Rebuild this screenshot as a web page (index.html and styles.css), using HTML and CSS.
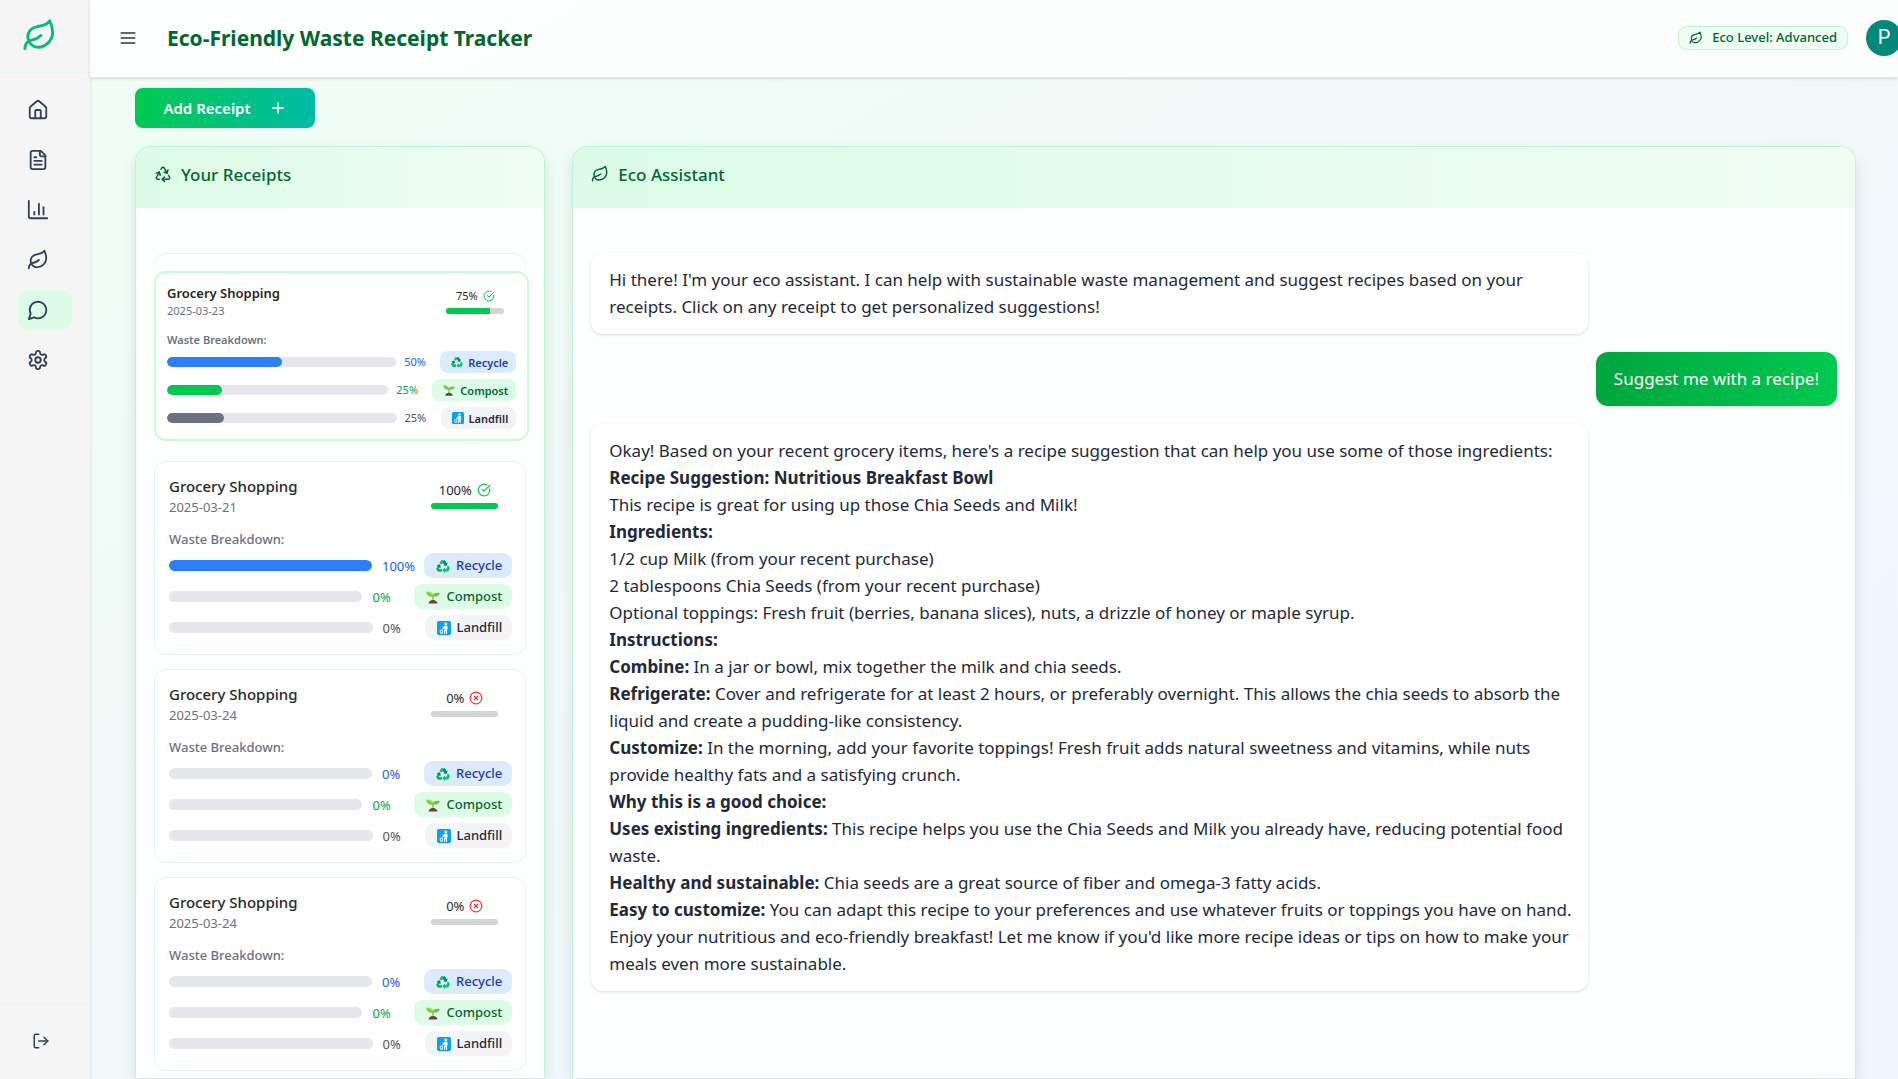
FILE: index.html
```html
<!DOCTYPE html>
<html lang="en">
<head>
<meta charset="utf-8">
<meta name="viewport" content="width=device-width, initial-scale=1">
<title>Eco-Friendly Waste Receipt Tracker</title>
<link rel="stylesheet" href="styles.css">
</head>
<body>
<svg class="sprite" aria-hidden="true">
  <symbol id="leaf" viewBox="0 0 24 24"><path d="M11 20A7 7 0 0 1 9.8 6.1C15.5 5 17 4.48 19 2c1 2 2 4.18 2 8 0 5.5-4.78 10-10 10Z"/><path d="M2 21c0-3 1.85-5.36 5.08-6C9.5 14.52 12 13 13 12"/></symbol>
  <symbol id="home" viewBox="0 0 24 24"><path d="M15 21v-8a1 1 0 0 0-1-1h-4a1 1 0 0 0-1 1v8"/><path d="M3 10a2 2 0 0 1 .709-1.528l7-5.999a2 2 0 0 1 2.582 0l7 5.999A2 2 0 0 1 21 10v9a2 2 0 0 1-2 2H5a2 2 0 0 1-2-2z"/></symbol>
  <symbol id="file" viewBox="0 0 24 24"><path d="M15 2H6a2 2 0 0 0-2 2v16a2 2 0 0 0 2 2h12a2 2 0 0 0 2-2V7Z"/><path d="M14 2v4a2 2 0 0 0 2 2h4"/><path d="M10 9H8"/><path d="M16 13H8"/><path d="M16 17H8"/></symbol>
  <symbol id="chart" viewBox="0 0 24 24"><path d="M2 2v17a2 2 0 0 0 2 2h18"/><path d="M18 17V9"/><path d="M13 17V5"/><path d="M8 17v-3"/></symbol>
  <symbol id="chat" viewBox="0 0 24 24"><path d="M7.9 20A9 9 0 1 0 4 16.1L2 22Z"/></symbol>
  <symbol id="gear" viewBox="0 0 24 24"><path d="M12.22 2h-.44a2 2 0 0 0-2 2v.18a2 2 0 0 1-1 1.73l-.43.25a2 2 0 0 1-2 0l-.15-.08a2 2 0 0 0-2.73.73l-.22.38a2 2 0 0 0 .73 2.73l.15.1a2 2 0 0 1 1 1.72v.51a2 2 0 0 1-1 1.74l-.15.09a2 2 0 0 0-.73 2.73l.22.38a2 2 0 0 0 2.73.73l.15-.08a2 2 0 0 1 2 0l.43.25a2 2 0 0 1 1 1.73V20a2 2 0 0 0 2 2h.44a2 2 0 0 0 2-2v-.18a2 2 0 0 1 1-1.73l.43-.25a2 2 0 0 1 2 0l.15.08a2 2 0 0 0 2.73-.73l.22-.39a2 2 0 0 0-.73-2.73l-.15-.08a2 2 0 0 1-1-1.74v-.5a2 2 0 0 1 1-1.74l.15-.09a2 2 0 0 0 .73-2.73l-.22-.38a2 2 0 0 0-2.73-.73l-.15.08a2 2 0 0 1-2 0l-.43-.25a2 2 0 0 1-1-1.73V4a2 2 0 0 0-2-2z"/><circle cx="12" cy="12" r="3"/></symbol>
  <symbol id="logout" viewBox="0 0 24 24"><path d="M9 21H5a2 2 0 0 1-2-2V5a2 2 0 0 1 2-2h4"/><path d="m16 17 5-5-5-5"/><path d="M21 12H9"/></symbol>
  <symbol id="menu" viewBox="0 0 24 24"><path d="M4 6h16"/><path d="M4 12h16"/><path d="M4 18h16"/></symbol>
  <symbol id="plus" viewBox="0 0 24 24"><path d="M5 12h14"/><path d="M12 5v14"/></symbol>
  <symbol id="recycle" viewBox="0 0 24 24"><path d="M7 19H4.815a1.83 1.83 0 0 1-1.57-.881 1.785 1.785 0 0 1-.004-1.784L7.196 9.5"/><path d="M11 19h8.203a1.83 1.83 0 0 0 1.556-.89 1.784 1.784 0 0 0 0-1.775l-1.226-2.12"/><path d="m14 16-3 3 3 3"/><path d="M8.293 13.596 7.196 9.5 3.1 10.598"/><path d="m9.344 5.811 1.093-1.892A1.83 1.83 0 0 1 11.985 3a1.784 1.784 0 0 1 1.546.888l3.943 6.843"/><path d="m13.378 9.633 4.096 1.098 1.097-4.096"/></symbol>
  <symbol id="check" viewBox="0 0 24 24"><path d="M21.801 10A10 10 0 1 1 17 3.335"/><path d="m9 11 3 3L22 4"/></symbol>
  <symbol id="cross" viewBox="0 0 24 24"><circle cx="12" cy="12" r="10"/><path d="m15 9-6 6"/><path d="m9 9 6 6"/></symbol>
  <symbol id="emoji-recycle" viewBox="0 0 16 16"><path fill="#00c46a" d="M6 1.5h4l1.8 3-2.6 1.6L8 4 6.7 6.200 4 4.700Z"/><path fill="#00895a" d="m10 1.500 2 3.200 1.200-.7-1 4-4-1 1.300-.7L7.600 3.300Z"/><path fill="#00c46a" d="m12.400 8.300 2.600-.2.600 3.100-1.800 3.100H10v1.400l-2.800-3 2.800-3v1.500h2.200l.6-1Z"/><path fill="#00895a" d="m.5 7 4-1 1.200 4-1.300-.7-1.200 2.100h3.500v2.900H2.300L.4 11.300l1.500-3.500Z"/><path fill="#00c46a" d="M.4 11.300 2 8l1.500 1-.6 2.400h3.800v2.900H2.200Z"/></symbol>
  <symbol id="emoji-sprout" viewBox="0 0 16 16"><path fill="#7bc043" d="M7.200 12V7.500C4 8 1 6.500.3 2.300c3-.6 6.200.2 7.600 3.200C9 3.600 12.500 2.600 15.700 3.600c-.5 3-3.400 4.400-6.900 3.900V12Z"/><path fill="#9be04a" d="M.3 2.300c3-.6 6.200.2 7.600 3.200l-.5 1.200C5.400 4.200 3 3.300.3 2.300Z"/><path fill="#6d4038" d="M3 15.500c.2-2.500 2.200-4 5-4s4.800 1.500 5 4Z"/></symbol>
  <symbol id="emoji-litter" viewBox="0 0 16 16"><rect width="16" height="16" rx="2" fill="#00a4ef"/><circle cx="10" cy="3.200" r="1.600" fill="#fff"/><path fill="#fff" d="M8.500 5.200h3.200l.8 4-.9.300-.3-1.500.3 6.500h-1.300L9.800 10l-.6 4.500H7.800l.8-6.500-2.500 1.700-.5-.8Z"/><path fill="none" stroke="#fff" d="M3.500 10.500h3L6.200 14H4Z"/></symbol>
</svg>

<div class="app">
  <aside class="sidebar">
    <a class="brand" href="#" aria-label="Home page"><svg class="icon icon-brand"><use href="#leaf"/></svg></a>
    <nav class="nav" aria-label="Main">
      <a href="#" aria-label="Home"><svg class="icon icon-nav"><use href="#home"/></svg></a>
      <a href="#" aria-label="Receipts"><svg class="icon icon-nav"><use href="#file"/></svg></a>
      <a href="#" aria-label="Statistics"><svg class="icon icon-nav"><use href="#chart"/></svg></a>
      <a href="#" aria-label="Eco tips"><svg class="icon icon-nav"><use href="#leaf"/></svg></a>
      <a href="#" aria-label="Assistant" aria-current="page"><svg class="icon icon-nav"><use href="#chat"/></svg></a>
      <a href="#" aria-label="Settings"><svg class="icon icon-nav"><use href="#gear"/></svg></a>
    </nav>
    <div class="sidebar-foot"><button type="button" aria-label="Log out"><svg class="icon icon-md"><use href="#logout"/></svg></button></div>
  </aside>

  <div class="page">
    <header class="topbar">
      <button type="button" class="menu" aria-label="Toggle menu"><svg class="icon icon-menu"><use href="#menu"/></svg></button>
      <h1>Eco-Friendly Waste Receipt Tracker</h1>
      <span class="level"><svg class="icon icon-sm"><use href="#leaf"/></svg>Eco Level: Advanced</span>
      <button type="button" class="avatar" aria-label="Profile">P</button>
    </header>

    <main>
      <button type="button" class="add">Add Receipt<svg class="icon icon-md"><use href="#plus"/></svg></button>
      <div class="columns">
        <section class="panel">
          <h2><svg class="icon icon-md"><use href="#recycle"/></svg>Your Receipts</h2>
          <div class="receipts">
            <div class="slot">
              <div class="slot-edge"></div>
              <article class="receipt lifted">
                <div class="receipt-head">
                  <div><h3>Grocery Shopping</h3><p class="date">2025-03-23</p></div>
                  <div class="score"><span class="score-value">75%<svg class="icon ok"><use href="#check"/></svg></span><div class="score-bar"><div class="fill compost" style="width:75%"></div></div></div>
                </div>
                <p class="caption">Waste Breakdown:</p>
                <ul class="waste">
                  <li><div class="track"><div class="fill recycle" style="width:50%"></div></div><span class="pct recycle-text">50%</span><span class="tag tag-recycle"><svg class="emoji"><use href="#emoji-recycle"/></svg>Recycle</span></li>
                  <li><div class="track"><div class="fill compost" style="width:25%"></div></div><span class="pct compost-text">25%</span><span class="tag tag-compost"><svg class="emoji"><use href="#emoji-sprout"/></svg>Compost</span></li>
                  <li><div class="track"><div class="fill landfill" style="width:25%"></div></div><span class="pct">25%</span><span class="tag tag-landfill"><svg class="emoji"><use href="#emoji-litter"/></svg>Landfill</span></li>
                </ul>
              </article>
            </div>
            <article class="receipt">
              <div class="receipt-head">
                <div><h3>Grocery Shopping</h3><p class="date">2025-03-21</p></div>
                <div class="score"><span class="score-value">100%<svg class="icon ok"><use href="#check"/></svg></span><div class="score-bar"><div class="fill compost" style="width:100%"></div></div></div>
              </div>
              <p class="caption">Waste Breakdown:</p>
              <ul class="waste">
                <li><div class="track"><div class="fill recycle" style="width:100%"></div></div><span class="pct recycle-text">100%</span><span class="tag tag-recycle"><svg class="emoji"><use href="#emoji-recycle"/></svg>Recycle</span></li>
                <li><div class="track"></div><span class="pct compost-text">0%</span><span class="tag tag-compost"><svg class="emoji"><use href="#emoji-sprout"/></svg>Compost</span></li>
                <li><div class="track"></div><span class="pct">0%</span><span class="tag tag-landfill"><svg class="emoji"><use href="#emoji-litter"/></svg>Landfill</span></li>
              </ul>
            </article>
            <article class="receipt">
              <div class="receipt-head">
                <div><h3>Grocery Shopping</h3><p class="date">2025-03-24</p></div>
                <div class="score"><span class="score-value">0%<svg class="icon bad"><use href="#cross"/></svg></span><div class="score-bar"></div></div>
              </div>
              <p class="caption">Waste Breakdown:</p>
              <ul class="waste">
                <li><div class="track"></div><span class="pct recycle-text">0%</span><span class="tag tag-recycle"><svg class="emoji"><use href="#emoji-recycle"/></svg>Recycle</span></li>
                <li><div class="track"></div><span class="pct compost-text">0%</span><span class="tag tag-compost"><svg class="emoji"><use href="#emoji-sprout"/></svg>Compost</span></li>
                <li><div class="track"></div><span class="pct">0%</span><span class="tag tag-landfill"><svg class="emoji"><use href="#emoji-litter"/></svg>Landfill</span></li>
              </ul>
            </article>
            <article class="receipt">
              <div class="receipt-head">
                <div><h3>Grocery Shopping</h3><p class="date">2025-03-24</p></div>
                <div class="score"><span class="score-value">0%<svg class="icon bad"><use href="#cross"/></svg></span><div class="score-bar"></div></div>
              </div>
              <p class="caption">Waste Breakdown:</p>
              <ul class="waste">
                <li><div class="track"></div><span class="pct recycle-text">0%</span><span class="tag tag-recycle"><svg class="emoji"><use href="#emoji-recycle"/></svg>Recycle</span></li>
                <li><div class="track"></div><span class="pct compost-text">0%</span><span class="tag tag-compost"><svg class="emoji"><use href="#emoji-sprout"/></svg>Compost</span></li>
                <li><div class="track"></div><span class="pct">0%</span><span class="tag tag-landfill"><svg class="emoji"><use href="#emoji-litter"/></svg>Landfill</span></li>
              </ul>
            </article>
          </div>
        </section>

        <section class="panel">
          <h2><svg class="icon icon-md"><use href="#leaf"/></svg>Eco Assistant</h2>
          <div class="chat">
            <div class="bubble"><p>Hi there! I'm your eco assistant. I can help with sustainable waste management and suggest recipes based on your receipts. Click on any receipt to get personalized suggestions!</p></div>
            <div class="bubble mine"><p>Suggest me with a recipe!</p></div>
            <div class="bubble">
              <p>Okay! Based on your recent grocery items, here's a recipe suggestion that can help you use some of those ingredients:</p>
              <p><strong>Recipe Suggestion: Nutritious Breakfast Bowl</strong></p>
              <p>This recipe is great for using up those Chia Seeds and Milk!</p>
              <p><strong>Ingredients:</strong></p>
              <p>1/2 cup Milk (from your recent purchase)</p>
              <p>2 tablespoons Chia Seeds (from your recent purchase)</p>
              <p>Optional toppings: Fresh fruit (berries, banana slices), nuts, a drizzle of honey or maple syrup.</p>
              <p><strong>Instructions:</strong></p>
              <p><strong>Combine:</strong> In a jar or bowl, mix together the milk and chia seeds.</p>
              <p><strong>Refrigerate:</strong> Cover and refrigerate for at least 2 hours, or preferably overnight. This allows the chia seeds to absorb the liquid and create a pudding-like consistency.</p>
              <p><strong>Customize:</strong> In the morning, add your favorite toppings! Fresh fruit adds natural sweetness and vitamins, while nuts provide healthy fats and a satisfying crunch.</p>
              <p><strong>Why this is a good choice:</strong></p>
              <p><strong>Uses existing ingredients:</strong> This recipe helps you use the Chia Seeds and Milk you already have, reducing potential food waste.</p>
              <p><strong>Healthy and sustainable:</strong> Chia seeds are a great source of fiber and omega-3 fatty acids.</p>
              <p><strong>Easy to customize:</strong> You can adapt this recipe to your preferences and use whatever fruits or toppings you have on hand.</p>
              <p>Enjoy your nutritious and eco-friendly breakfast! Let me know if you'd like more recipe ideas or tips on how to make your meals even more sustainable.</p>
            </div>
          </div>
        </section>
      </div>
    </main>
  </div>
</div>
</body>
</html>
```
FILE: styles.css
```css
:root {
  --green-50: #f0fdf4;
  --green-100: #dcfce7;
  --green-200: #b9f8cf;
  --green-500: #00c950;
  --green-800: #016630;
  --ink: #1e2939;
  --muted: #6a7282;
}

*, *::before, *::after { box-sizing: border-box; }

body {
  margin: 0;
  height: 100vh;
  overflow: hidden;
  background: linear-gradient(to bottom right, #f0fdf4, #eff6ff);
  color: var(--ink);
  font-family: "Segoe UI", "Noto Sans", "Open Sans", sans-serif;
  font-size: 17px;
  line-height: 27px;
}

h1, h2, h3, p, ul { margin: 0; padding: 0; }
ul { list-style: none; }
button { font: inherit; border: 0; padding: 0; background: none; color: inherit; cursor: pointer; }

.sprite { display: none; }
.icon {
  flex: none;
  width: 16px;
  height: 16px;
  fill: none;
  stroke: currentColor;
  stroke-width: 2;
  stroke-linecap: round;
  stroke-linejoin: round;
}
.icon-sm { width: 14px; height: 14px; }
.icon-md { width: 18px; height: 18px; }
.icon-nav { width: 22px; height: 22px; }
.icon-menu { width: 20px; height: 20px; stroke-width: 2; }
.icon-brand { width: 35px; height: 35px; }

.app { display: flex; height: 100%; }

/* Sidebar */
.sidebar {
  flex: none;
  width: 90px;
  display: flex;
  flex-direction: column;
  background: #f5f5f5;
  box-shadow: 1px 0 2px rgba(0, 0, 0, .08);
  color: #314158;
}
.brand {
  display: flex;
  height: 73px;
  padding: 18px 22px;
  border-bottom: 1px solid var(--green-100);
  color: #00bc7d;
}
.nav {
  flex: 1;
  display: flex;
  flex-direction: column;
  gap: 10px;
  padding: 17px 18px;
}
.nav a {
  display: flex;
  align-items: center;
  height: 40px;
  padding-left: 9px;
  border-radius: 10px;
  color: inherit;
}
.nav a[aria-current] { background: var(--green-100); }
.sidebar-foot {
  display: flex;
  height: 76px;
  padding: 3px 0 0 32px;
  border-top: 1px solid var(--green-100);
}

/* Top bar */
.page { flex: 1; min-width: 0; display: flex; flex-direction: column; }
.topbar {
  flex: none;
  display: flex;
  align-items: center;
  height: 78px;
  padding: 0 0 2px 28px;
  overflow: clip;
  overflow-clip-margin: 4px;
  background: rgba(255, 255, 255, .8);
  border-bottom: 1px solid #d5ecdf;
  box-shadow: 0 1px 3px rgba(0, 0, 0, .12);
}
.menu { display: flex; color: #333; }
h1 {
  flex: 1;
  margin-left: 29px;
  color: var(--green-800);
  font-size: 21px;
  font-weight: 700;
  line-height: 30px;
}
.level {
  display: flex;
  align-items: center;
  gap: 9px;
  height: 24px;
  padding: 0 10px;
  border: 1px solid var(--green-200);
  border-radius: 9px;
  background: var(--green-50);
  color: var(--green-800);
  font-size: 13px;
  font-weight: 500;
}
.avatar {
  flex: none;
  width: 36px;
  height: 36px;
  margin: 0 -4px 0 18px;
  border-radius: 50%;
  background: #00897b;
  color: #fff;
  font-family: Roboto, sans-serif;
  font-size: 20px;
}

/* Main area */
main {
  flex: 1;
  min-height: 0;
  display: flex;
  flex-direction: column;
  align-items: flex-start;
  gap: 18px;
  padding: 10px 42px 1px 45px;
}
.add {
  flex: none;
  display: flex;
  align-items: center;
  justify-content: center;
  gap: 18px;
  width: 180px;
  height: 40px;
  border-radius: 8px;
  background: linear-gradient(to right, #00c950, #00bba7);
  color: #fff;
  font-size: 15px;
  font-weight: 600;
}
.columns {
  flex: 1;
  min-height: 0;
  width: 100%;
  display: grid;
  grid-template-columns: minmax(0, 31fr) minmax(0, 97fr);
  gap: 27px;
}
.panel {
  display: flex;
  flex-direction: column;
  min-height: 0;
  border: 1px solid var(--green-200);
  border-bottom: 0;
  border-radius: 16px 16px 0 0;
  background: rgba(255, 255, 255, .85);
  box-shadow: 0 8px 16px rgba(0, 0, 0, .1);
  overflow: hidden;
}
h2 {
  flex: none;
  display: flex;
  align-items: center;
  gap: 9px;
  height: 61px;
  padding: 0 18px 7px;
  background: linear-gradient(to right, var(--green-100), var(--green-50));
  color: var(--green-800);
  font-size: 17px;
  font-weight: 500;
}

/* Receipts */
.receipts {
  flex: 1;
  min-height: 0;
  display: flex;
  flex-direction: column;
  gap: 14px;
  padding: 45px 18px 0;
  overflow: hidden;
}
.slot { flex: none; height: 194px; }
.slot-edge {
  height: 13px;
  margin-bottom: 5px;
  border: 1px solid var(--green-100);
  border-bottom: 0;
  border-radius: 12px 12px 0 0;
}
.receipt {
  flex: none;
  height: 194px;
  padding: 13px 13px 13px 14px;
  border: 1px solid var(--green-100);
  border-radius: 12px;
  background: #fff;
}
.receipt-head { display: flex; justify-content: space-between; height: 51px; }
h3 { font-size: 15px; font-weight: 500; line-height: 22px; color: #262626; }
.date { font-size: 13px; line-height: 20px; color: var(--muted); }
.score {
  display: flex;
  flex-direction: column;
  align-items: center;
  gap: 4px;
  width: 67px;
  margin: 6px 14px 0 0;
}
.score-value {
  display: flex;
  align-items: center;
  gap: 5px;
  font-size: 13px;
  line-height: 18px;
  color: #262626;
}
.score-value .icon { width: 14px; height: 14px; }
.ok { color: var(--green-500); }
.bad { color: #fb2c36; }
.score-bar { width: 100%; height: 6px; border-radius: 3px; background: #d4d4d4; overflow: hidden; }
.caption { font-size: 13px; font-weight: 500; line-height: 27px; color: var(--muted); }
.waste { display: flex; flex-direction: column; gap: 6px; }
.waste li { display: flex; align-items: center; }
.track { flex: 1; height: 11px; border-radius: 6px; background: #e5e7eb; overflow: hidden; }
.fill { height: 100%; }
.track .fill { border-radius: 6px; }
.recycle { background: #2b7fff; }
.compost { background: var(--green-500); }
.landfill { background: #6a7282; }
.pct { width: 32px; margin: 0 10px; font-size: 13px; line-height: 20px; color: #4a5565; }
.recycle-text { color: #155dfc; }
.compost-text { color: #00a63e; }
.tag {
  display: flex;
  align-items: center;
  gap: 6px;
  height: 25px;
  padding: 0 10px 0 12px;
  border-radius: 9px;
  font-size: 13px;
  font-weight: 500;
}
.emoji { width: 14px; height: 14px; }
.tag-recycle { background: #dbeafe; color: #193cb8; }
.tag-compost { background: var(--green-100); color: var(--green-800); }
.tag-landfill { background: #f3f4f6; color: var(--ink); }

/* Receipt in its lifted, slightly reduced state */
.lifted {
  width: calc(100% + 3px);
  height: 170px;
  padding: 10px 11px;
  border: 2px solid #c9fadb;
}
.lifted .receipt-head { height: 45px; }
.lifted h3 { font-size: 13px; line-height: 20px; }
.lifted .date, .lifted .caption, .lifted .pct, .lifted .tag, .lifted .score-value { font-size: 11px; }
.lifted h3, .lifted .caption, .lifted .tag { font-weight: 600; }
.lifted .date { line-height: 16px; }
.lifted .caption { line-height: 23px; }
.lifted .score { gap: 3px; width: 58px; margin: 4px 12px 0 0; }
.lifted .score-value .icon, .lifted .emoji { width: 12px; height: 12px; }
.lifted .track { height: 10px; }
.lifted .pct { width: 28px; margin: 0 8px; }
.lifted .tag { height: 22px; padding: 0 8px 0 11px; border-radius: 8px; gap: 5px; }

/* Chat */
.chat {
  flex: 1;
  min-height: 0;
  display: flex;
  flex-direction: column;
  gap: 18px;
  padding: 45px 18px 0;
  overflow: hidden;
}
.bubble {
  flex: none;
  align-self: flex-start;
  max-width: 80%;
  padding: 13px 10px 14px 18px;
  border-radius: 12px;
  background: #fff;
  box-shadow: 0 1px 3px rgba(0, 0, 0, .14);
}
.mine {
  align-self: flex-end;
  padding-right: 18px;
  background: linear-gradient(to right, #00a63e, #00c950);
  color: #fff;
}
```
